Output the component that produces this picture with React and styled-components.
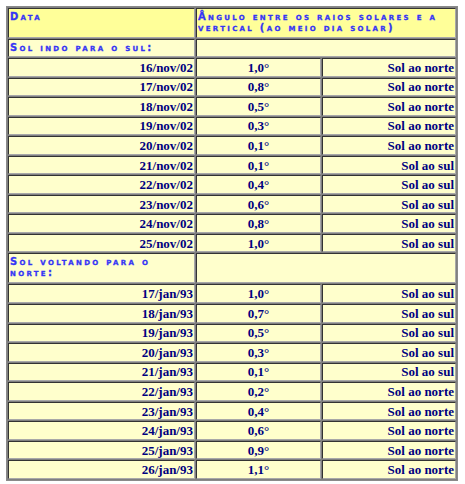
import React from "react";
import styled, { createGlobalStyle } from "styled-components";

const GlobalStyle = createGlobalStyle`
  body {
    margin: 6px;
    background: #ffffff;
  }
`;

const Table = styled.table`
  width: 452px;
  table-layout: fixed;
  border-collapse: separate;
  border-spacing: 1px;
  border: 1px solid #8a8a8a;
  background: #808080;
`;

const Row = styled.tr`
  height: ${({ $h }) => $h}px;
`;

const Cell = styled.td`
  box-sizing: border-box;
  padding: 0 1px;
  border: 1px solid;
  border-color: #333333 #a8a8a8 #a8a8a8 #333333;
  background: ${({ $head }) => ($head ? "#ffff99" : "#ffffcc")};
  text-align: ${({ $align }) => $align || "left"};
  vertical-align: ${({ $valign }) => $valign || "middle"};
  font-family: "Liberation Serif", "Times New Roman", serif;
  font-size: 13px;
  line-height: 15px;
`;

const Label = styled.div`
  font-family: "DejaVu Sans", Verdana, sans-serif;
  font-weight: bold;
  font-size: 10px;
  line-height: 11px;
  font-variant: small-caps;
  letter-spacing: 2.3px;
  -webkit-text-stroke: 0.3px #3535f5;
  color: #3535f5;
  padding-top: 2px;
`;

const Value = styled.span`
  font-weight: bold;
  color: #000080;
`;

const going = [
  ["16/nov/02", "1,0°", "Sol ao norte"],
  ["17/nov/02", "0,8°", "Sol ao norte"],
  ["18/nov/02", "0,5°", "Sol ao norte"],
  ["19/nov/02", "0,3°", "Sol ao norte"],
  ["20/nov/02", "0,1°", "Sol ao norte"],
  ["21/nov/02", "0,1°", "Sol ao sul"],
  ["22/nov/02", "0,4°", "Sol ao sul"],
  ["23/nov/02", "0,6°", "Sol ao sul"],
  ["24/nov/02", "0,8°", "Sol ao sul"],
  ["25/nov/02", "1,0°", "Sol ao sul"],
];

const returning = [
  ["17/jan/93", "1,0°", "Sol ao sul"],
  ["18/jan/93", "0,7°", "Sol ao sul"],
  ["19/jan/93", "0,5°", "Sol ao sul"],
  ["20/jan/93", "0,3°", "Sol ao sul"],
  ["21/jan/93", "0,1°", "Sol ao sul"],
  ["22/jan/93", "0,2°", "Sol ao norte"],
  ["23/jan/93", "0,4°", "Sol ao norte"],
  ["24/jan/93", "0,6°", "Sol ao norte"],
  ["25/jan/93", "0,9°", "Sol ao norte"],
  ["26/jan/93", "1,1°", "Sol ao norte"],
];

const DataRows = ({ rows }) =>
  rows.map(([date, angle, side]) => (
    <Row $h={18.56} key={date}>
      <Cell $align="right">
        <Value>{date}</Value>
      </Cell>
      <Cell $align="center">
        <Value>{angle}</Value>
      </Cell>
      <Cell $align="right">
        <Value>{side}</Value>
      </Cell>
    </Row>
  ));

const App = () => (
  <>
    <GlobalStyle />
    <Table>
      <colgroup>
        <col style={{ width: 187 }} />
        <col style={{ width: 125 }} />
        <col style={{ width: 134 }} />
      </colgroup>
      <tbody>
        <Row $h={30}>
          <Cell $head $valign="top">
            <Label>Data</Label>
          </Cell>
          <Cell $head $valign="top" colSpan={2}>
            <Label>Ângulo entre os raios solares e a vertical (ao meio dia solar)</Label>
          </Cell>
        </Row>
        <Row $h={18}>
          <Cell $valign="top">
            <Label>Sol indo para o sul:</Label>
          </Cell>
          <Cell colSpan={2} />
        </Row>
        <DataRows rows={going} />
        <Row $h={30}>
          <Cell $valign="top">
            <Label>Sol voltando para o norte:</Label>
          </Cell>
          <Cell colSpan={2} />
        </Row>
        <DataRows rows={returning} />
      </tbody>
    </Table>
  </>
);

export default App;
